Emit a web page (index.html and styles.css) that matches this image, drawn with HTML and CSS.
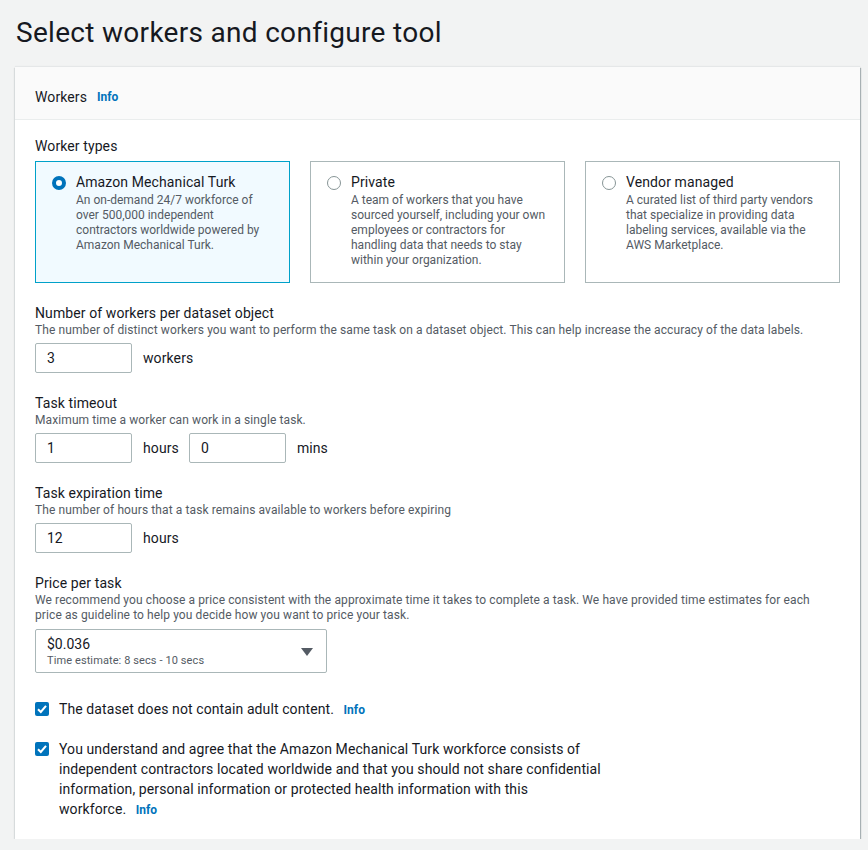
FILE: index.html
```html
<!DOCTYPE html>
<html>
<head>
<meta charset="utf-8">
<link rel="stylesheet" href="styles.css">
</head>
<body>
<h1 class="title">Select workers and configure tool</h1>
<div class="card">
  <div class="card-header">
    <span class="card-title">Workers</span>
    <a class="info">Info</a>
  </div>
  <div class="card-body">
    <div class="field">
      <div class="label">Worker types</div>
      <div class="tiles">
        <div class="tile selected">
          <span class="radio on"></span>
          <div class="tile-text">
            <div class="tile-title">Amazon Mechanical Turk</div>
            <div class="tile-desc">An on-demand 24/7 workforce of over 500,000 independent contractors worldwide powered by Amazon Mechanical Turk.</div>
          </div>
        </div>
        <div class="tile">
          <span class="radio"></span>
          <div class="tile-text">
            <div class="tile-title">Private</div>
            <div class="tile-desc">A team of workers that you have sourced yourself, including your own employees or contractors for handling data that needs to stay within your organization.</div>
          </div>
        </div>
        <div class="tile">
          <span class="radio"></span>
          <div class="tile-text">
            <div class="tile-title">Vendor managed</div>
            <div class="tile-desc">A curated list of third party vendors that specialize in providing data labeling services, available via the AWS Marketplace.</div>
          </div>
        </div>
      </div>
    </div>

    <div class="field">
      <div class="label">Number of workers per dataset object</div>
      <div class="desc">The number of distinct workers you want to perform the same task on a dataset object. This can help increase the accuracy of the data labels.</div>
      <div class="input-row">
        <div class="input">3</div><span class="unit">workers</span>
      </div>
    </div>

    <div class="field">
      <div class="label">Task timeout</div>
      <div class="desc">Maximum time a worker can work in a single task.</div>
      <div class="input-row">
        <div class="input">1</div><span class="unit">hours</span>
        <div class="input">0</div><span class="unit">mins</span>
      </div>
    </div>

    <div class="field">
      <div class="label">Task expiration time</div>
      <div class="desc">The number of hours that a task remains available to workers before expiring</div>
      <div class="input-row">
        <div class="input">12</div><span class="unit">hours</span>
      </div>
    </div>

    <div class="field">
      <div class="label">Price per task</div>
      <div class="desc narrow">We recommend you choose a price consistent with the approximate time it takes to complete a task. We have provided time estimates for each price as guideline to help you decide how you want to price your task.</div>
      <div class="select">
        <div>
          <div class="select-value">$0.036</div>
          <div class="select-sub">Time estimate: 8 secs - 10 secs</div>
        </div>
        <svg class="caret" width="12" height="8" viewBox="0 0 12 8"><polygon points="0,0 12,0 6,8" fill="#545b64"/></svg>
      </div>
    </div>

    <div class="check-row first">
      <span class="checkbox"><svg width="14" height="14" viewBox="0 0 14 14"><polyline points="3,7.2 5.8,10 11,3.8" fill="none" stroke="#fff" stroke-width="2"/></svg></span>
      <div class="check-text">The dataset does not contain adult content. <a class="info">Info</a></div>
    </div>
    <div class="check-row">
      <span class="checkbox"><svg width="14" height="14" viewBox="0 0 14 14"><polyline points="3,7.2 5.8,10 11,3.8" fill="none" stroke="#fff" stroke-width="2"/></svg></span>
      <div class="check-text long">You understand and agree that the Amazon Mechanical Turk workforce consists of independent contractors located worldwide and that you should not share confidential information, personal information or protected health information with this<br>workforce. <a class="info">Info</a></div>
    </div>
  </div>
</div>
</body>
</html>
```

FILE: styles.css
```css
* { box-sizing: border-box; }
body {
  margin: 0;
  background: #f2f3f3;
  font-family: Roboto, "Open Sans", Arial, sans-serif;
  color: #16191f;
  padding: 0 0 0 15px;
}
.title {
  margin: 0;
  padding: 15px 0 0 1px;
  height: 67px;
  font-size: 28px;
  font-weight: 400;
  line-height: 36px;
  letter-spacing: 0.3px;
}
.card {
  width: 845px;
  background: #fff;
  box-shadow: 1px 1px 1px rgba(0,28,36,0.3), -1px 1px 1px rgba(0,28,36,0.1), 0 -1px 1px rgba(0,28,36,0.05);
}
.card-header {
  background: #fafafa;
  height: 53px;
  border-bottom: 1px solid #eaeded;
  display: flex;
  align-items: center;
  padding: 7px 20px 0 20px;
  font-size: 14px;
}
.card-title { font-size: 14px; margin-right: 10px; letter-spacing: 0.1px; }
.info {
  color: #0073bb;
  font-size: 12px;
  font-weight: 700;
  line-height: 1;
}
.card-body {
  padding: 16px 20px 20px 20px;
}
.field { margin-bottom: 20px; }
.label {
  font-size: 14px;
  line-height: 20px;
  letter-spacing: 0.1px;
}
.desc {
  font-size: 12px;
  line-height: 15px;
  color: #545b64;
  letter-spacing: 0.1px;
}
.desc.narrow { max-width: 790px; }
.tiles {
  display: flex;
  gap: 20px;
  margin-top: 5px;
}
.tile {
  width: 255px;
  height: 122px;
  border: 1px solid #aab7b8;
  display: flex;
  padding: 10px 14px 10px 16px;
}
.tile.selected {
  background: #f1faff;
  border-color: #00a1c9;
}
.radio {
  flex: none;
  width: 14px;
  height: 14px;
  border-radius: 50%;
  border: 1px solid #879596;
  margin-top: 4px;
  margin-right: 10px;
  background: #fff;
}
.radio.on {
  border: 4px solid #0073bb;
}
.tile-title {
  font-size: 14px;
  line-height: 21px;
  letter-spacing: 0.1px;
}
.tile-desc {
  font-size: 12px;
  line-height: 15px;
  color: #545b64;
}
.input-row {
  display: flex;
  align-items: center;
  margin-top: 5px;
}
.input {
  width: 97px;
  height: 30px;
  border: 1px solid #aab7b8;
  border-radius: 2px;
  font-size: 14px;
  padding: 0 11px;
  display: flex;
  align-items: center;
}
.unit {
  font-size: 14px;
  margin: 0 10px 0 11px;
  letter-spacing: 0.1px;
}
.select {
  margin-top: 6px;
  width: 292px;
  height: 44px;
  border: 1px solid #aab7b8;
  border-radius: 2px;
  display: flex;
  align-items: center;
  justify-content: space-between;
  padding: 0 13px 0 11px;
}
.select-value { font-size: 14px; line-height: 18px; }
.select-sub { font-size: 11px; line-height: 15px; color: #545b64; letter-spacing: 0.1px; }
.caret { margin-top: 2px; }
.check-row {
  display: flex;
  align-items: flex-start;
  margin-bottom: 20px;
}
.check-row.first { margin-top: 26px; }
.check-row:last-child { margin-bottom: 0; }
.checkbox {
  flex: none;
  width: 14px;
  height: 14px;
  background: #0073bb;
  border-radius: 2px;
  margin: 3px 10px 0 0;
  display: flex;
}
.check-text {
  font-size: 14px;
  line-height: 20px;
  letter-spacing: 0.1px;
}
.check-text.long { max-width: 560px; }
.check-text .info { margin-left: 6px; letter-spacing: 0; }
```
